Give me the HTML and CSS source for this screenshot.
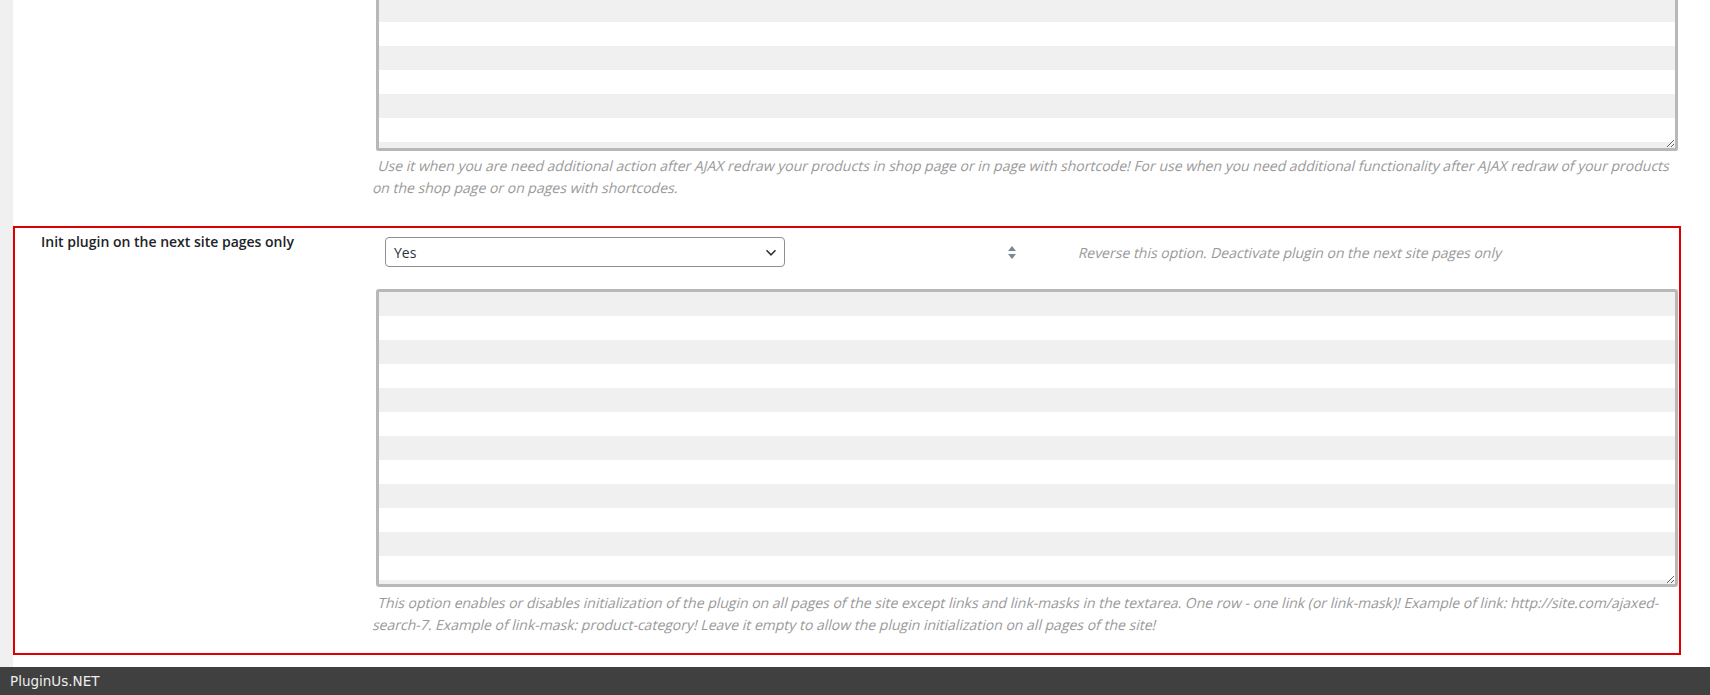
FILE: index.html
```html
<!DOCTYPE html>
<html lang="en">
  <head>
    <meta charset="UTF-8" />
    <meta name="viewport" content="width=device-width, initial-scale=1.0" />
    <title>Plugin options</title>
    <link rel="stylesheet" href="styles.css">
  </head>
  <body>
    <div class="wrap">
      <!-- previous option, scrolled half out of view -->
      <div class="option option-prev">
        <div class="option-label"></div>
        <div class="option-field">
          <textarea class="lines lines-cut"></textarea>
          <p class="description">Use it when you are need additional action after AJAX redraw your products in shop page or in page with shortcode! For use when you need additional functionality after AJAX redraw of your products on the shop page or on pages with shortcodes.</p>
        </div>
      </div>

      <!-- highlighted option -->
      <div class="option option-marked">
        <div class="option-label">Init plugin on the next site pages only</div>
        <div class="option-field">
          <div class="inline-row">
            <select class="yes-no">
              <option selected>Yes</option>
              <option>No</option>
            </select>
            <span class="spinner"><i class="up"></i><i class="down"></i></span>
            <span class="hint">Reverse this option. Deactivate plugin on the next site pages only</span>
          </div>
          <textarea class="lines lines-full"></textarea>
          <p class="description">This option enables or disables initialization of the plugin on all pages of the site except links and link-masks in the textarea. One row - one link (or link-mask)! Example of link: http://site.com/ajaxed-search-7. Example of link-mask: product-category! Leave it empty to allow the plugin initialization on all pages of the site!</p>
        </div>
      </div>
    </div>

    <div class="footer">PluginUs.NET</div>
  </body>
</html>
```

FILE: styles.css
```css
* {
  box-sizing: border-box;
}
body {
  margin: 0;
  background-color: #f0f0f0;
  font-family: "Open Sans", "Liberation Sans", sans-serif;
  font-size: 14px;
  color: #1d2327;
}
.wrap {
  margin-left: 13px;
  padding-right: 29px;
  padding-bottom: 12px;
  background-color: #fff;
}

/* one option row: label column + field column */
.option {
  display: grid;
  grid-template-columns: 363px 1fr;
}
.option-prev {
  padding-right: 3px;
  padding-bottom: 28px;
}
.option-marked {
  grid-template-columns: 361px 1fr;
  border: 2px solid #dd0000;
  padding: 9px 1px 18px 0;
}
.option-label {
  padding: 0 0 0 26px;
  margin-top: -6px;
  font-size: 14px;
  font-weight: 600;
  line-height: 22px;
}

/* striped textareas */
.lines {
  display: block;
  width: 100%;
  border: 3px solid #b8b8b8;
  border-radius: 3px;
  background: repeating-linear-gradient(#f0f0f0 0 24px, #fff 24px 48px);
  outline: none;
}
.lines-cut {
  height: 151px;
  border-top: none;
  border-radius: 0 0 3px 3px;
  background-position: 0 -2px;
}
.lines-full {
  height: 298px;
}

.description,
.hint {
  font-size: 14px;
  color: #999;
  transform: skewX(-14deg);
}
.description {
  margin: 4px 0 0;
  line-height: 21.5px;
}
.option-marked .description {
  margin-top: 5px;
}

/* select + sort arrows + hint */
.inline-row {
  display: flex;
  align-items: center;
  margin: 0 0 22px 9px;
}
.yes-no {
  width: 400px;
  height: 30px;
  padding: 0 24px 0 8px;
  border: 1px solid #8c8f94;
  border-radius: 4px;
  font-family: inherit;
  font-size: 14px;
  color: #2c3338;
  appearance: none;
  background: #fff url("data:image/svg+xml;charset=utf8,%3Csvg xmlns='http://www.w3.org/2000/svg' width='20' height='20' viewBox='0 0 20 20'%3E%3Cpath d='M5 7l5 5 5-5' fill='none' stroke='%232c3338' stroke-width='1.7'/%3E%3C/svg%3E") no-repeat right 4px top 55%;
  background-size: 18px 18px;
}
.spinner {
  display: flex;
  flex-direction: column;
  gap: 3px;
  margin-left: 223px;
}
.spinner i {
  width: 0;
  height: 0;
  border-left: 4px solid transparent;
  border-right: 4px solid transparent;
}
.spinner .up {
  border-bottom: 5px solid #7c8792;
}
.spinner .down {
  border-top: 5px solid #7c8792;
}
.hint {
  margin-left: 63px;
}

.footer {
  height: 28px;
  padding-left: 10px;
  background-color: #404040;
  color: #eee;
  font-family: "DejaVu Sans", sans-serif;
  font-size: 13.5px;
  line-height: 28px;
}
```
